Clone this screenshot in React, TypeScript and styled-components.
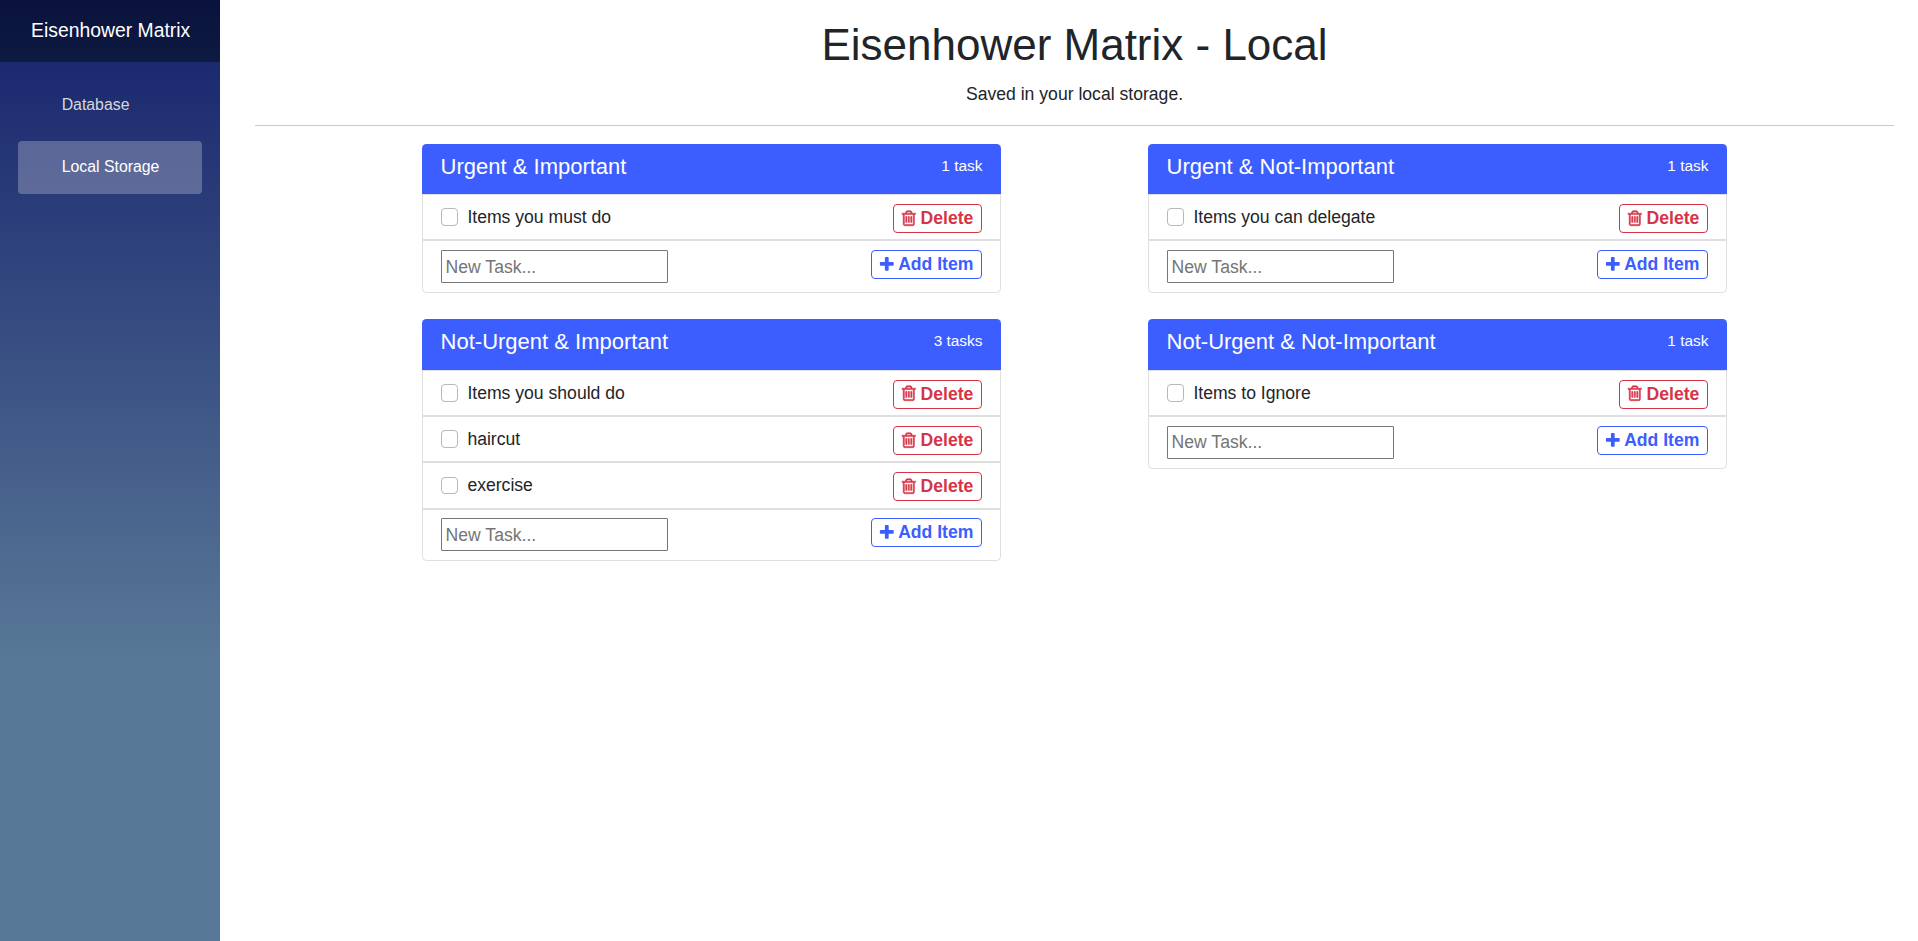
import React, { useState } from "react";
import styled, { createGlobalStyle, css } from "styled-components";

const GlobalStyle = createGlobalStyle`
  *, *::before, *::after { box-sizing: border-box; }
  html { font-size: 17.6px; }
  body {
    margin: 0;
    background: #fff;
    color: #212529;
    font-family: "Liberation Sans", Arial, sans-serif;
    font-size: 1rem;
    line-height: 1.5;
  }
`;

const Page = styled.div`
  display: flex;
  min-height: 100vh;
`;

const Sidebar = styled.aside`
  flex: none;
  width: 220px;
  background: linear-gradient(180deg, #15216b 0%, #587897 70%);
`;

const Brand = styled.div`
  display: flex;
  align-items: center;
  height: 62px;
  padding-left: 31px;
  background: linear-gradient(180deg, #09123c, #0e1a42);
  color: #fff;
  font-size: 19.36px;
`;

const Nav = styled.nav`
  display: flex;
  flex-direction: column;
  gap: 9px;
  padding: 17px 18px 0;
`;

const NavLink = styled.a<{ $active?: boolean }>`
  display: flex;
  align-items: center;
  height: 53px;
  padding: 0 0 2px 43.7px;
  border-radius: 4px;
  font-size: 15.84px;
  color: #d7d7d7;
  text-decoration: none;
  ${(p) =>
    p.$active &&
    css`
      background: rgba(255, 255, 255, 0.25);
      color: #fff;
    `}
`;

const Main = styled.main`
  flex: 1;
  padding: 19.4px 24px 0 35px;
`;

const Heading = styled.h1`
  margin: 0 0 8.8px;
  font-size: 2.5rem;
  font-weight: 400;
  line-height: 1.2;
  text-align: center;
`;

const Lead = styled.p`
  margin: 0;
  text-align: center;
`;

const Divider = styled.hr`
  height: 1px;
  margin: 17.6px 0;
  border: 0;
  background: #c8c9ca;
`;

const Board = styled.div`
  display: grid;
  grid-template-columns: 579px 579px;
  column-gap: 147px;
  row-gap: 26.3px;
  justify-content: center;
  align-items: start;
`;

const Card = styled.section`
  display: flex;
  flex-direction: column;
`;

const CardHeader = styled.header`
  display: flex;
  justify-content: space-between;
  height: 50.6px;
  padding: 10.2px 18.6px 0;
  border-radius: 4.4px 4.4px 0 0;
  background: #3d5efe;
  color: #fff;
`;

const CardTitle = styled.h2`
  margin: 0;
  font-size: 1.25rem;
  font-weight: 400;
  line-height: 1.2;
`;

const TaskCount = styled.small`
  font-size: 15.4px;
  line-height: 23.1px;
`;

const Row = styled.div<{ $last?: boolean }>`
  display: flex;
  align-items: flex-start;
  justify-content: space-between;
  height: ${(p) => (p.$last ? "52.6px" : "46.26px")};
  padding: 8.8px 17.6px 0;
  border: 1px solid #dfdfdf;
  ${(p) => p.$last && "border-radius: 0 0 4.4px 4.4px;"}
`;

const TaskLabel = styled.label`
  display: flex;
  gap: 9.2px;
`;

const Checkbox = styled.input`
  appearance: none;
  flex: none;
  width: 1em;
  height: 1em;
  margin: 4.4px 0 0;
  border: 1px solid rgba(0, 0, 0, 0.28);
  border-radius: 0.25em;
  background: #fff;
  font-size: 1rem;
  &:checked { background: #3d5efe; }
`;

const TaskInput = styled.input`
  width: 227px;
  height: 32.6px;
  padding: 2px 2px 1px 4px;
  border: 1px solid #767676;
  border-radius: 1px;
  font: inherit;
  &::placeholder { color: #757575; }
`;

const Button = styled.button<{ $tone: "danger" | "primary" }>`
  display: flex;
  align-items: center;
  height: 29px;
  padding: 0 8px;
  border: 1px solid currentColor;
  border-radius: 4px;
  background: #fff;
  color: ${(p) => (p.$tone === "danger" ? "#d63447" : "#3d5efe")};
  font-family: inherit;
  font-size: 1rem;
  font-weight: 700;
  line-height: 27px;
`;

const Icon = styled.svg<{ $gap: number }>`
  flex: none;
  width: 17.6px;
  height: 17.6px;
  margin-left: -2.2px;
  margin-right: ${(p) => p.$gap}px;
  fill: currentColor;
`;

const TrashIcon = () => (
  <Icon viewBox="0 60 1792 1792" $gap={3.3} stroke="currentColor" strokeWidth={50} aria-hidden="true">
    <path d="M704 736v576q0 14-9 23t-23 9h-64q-14 0-23-9t-9-23v-576q0-14 9-23t23-9h64q14 0 23 9t9 23zm256 0v576q0 14-9 23t-23 9h-64q-14 0-23-9t-9-23v-576q0-14 9-23t23-9h64q14 0 23 9t9 23zm256 0v576q0 14-9 23t-23 9h-64q-14 0-23-9t-9-23v-576q0-14 9-23t23-9h64q14 0 23 9t9 23zm128 724v-948h-896v948q0 22 7 40.5t14.5 27 10.5 8.5h832q3 0 10.5-8.5t14.5-27 7-40.5zm-672-1076h448l-48-117q-7-9-17-11h-317q-10 2-17 11zm928 32v64q0 14-9 23t-23 9h-96v948q0 83-47 143.5t-113 60.5h-832q-66 0-113-58.5t-47-141.5v-952h-96q-14 0-23-9t-9-23v-64q0-14 9-23t23-9h309l70-167q15-37 54-63t79-26h320q40 0 79 26t54 63l70 167h309q14 0 23 9t9 23z" />
  </Icon>
);

const PlusIcon = () => (
  <Icon viewBox="0 30 1792 1792" $gap={2.3} aria-hidden="true">
    <path d="M1600 736v192q0 40-28 68t-68 28h-416v416q0 40-28 68t-68 28h-192q-40 0-68-28t-28-68v-416h-416q-40 0-68-28t-28-68v-192q0-40 28-68t68-28h416v-416q0-40 28-68t68-28h192q40 0 68 28t28 68v416h416q40 0 68 28t28 68z" />
  </Icon>
);

interface Quadrant {
  title: string;
  tasks: string[];
}

const initialQuadrants: Quadrant[] = [
  { title: "Urgent & Important", tasks: ["Items you must do"] },
  { title: "Urgent & Not-Important", tasks: ["Items you can delegate"] },
  { title: "Not-Urgent & Important", tasks: ["Items you should do", "haircut", "exercise"] },
  { title: "Not-Urgent & Not-Important", tasks: ["Items to Ignore"] },
];

function QuadrantCard({ quadrant }: { quadrant: Quadrant }) {
  const [tasks, setTasks] = useState(quadrant.tasks);
  const [draft, setDraft] = useState("");

  const addTask = () => {
    if (!draft.trim()) return;
    setTasks([...tasks, draft.trim()]);
    setDraft("");
  };

  return (
    <Card>
      <CardHeader>
        <CardTitle>{quadrant.title}</CardTitle>
        <TaskCount>{`${tasks.length} ${tasks.length === 1 ? "task" : "tasks"}`}</TaskCount>
      </CardHeader>
      {tasks.map((task, index) => (
        <Row key={`${task}-${index}`}>
          <TaskLabel>
            <Checkbox type="checkbox" />
            {task}
          </TaskLabel>
          <Button $tone="danger" onClick={() => setTasks(tasks.filter((_, i) => i !== index))}>
            <TrashIcon />
            Delete
          </Button>
        </Row>
      ))}
      <Row $last>
        <TaskInput placeholder="New Task..." value={draft} onChange={(e) => setDraft(e.target.value)} />
        <Button $tone="primary" onClick={addTask}>
          <PlusIcon />
          Add Item
        </Button>
      </Row>
    </Card>
  );
}

export default function App() {
  return (
    <>
      <GlobalStyle />
      <Page>
        <Sidebar>
          <Brand>Eisenhower Matrix</Brand>
          <Nav>
            <NavLink href="#database">Database</NavLink>
            <NavLink href="#local" $active>
              Local Storage
            </NavLink>
          </Nav>
        </Sidebar>
        <Main>
          <Heading>Eisenhower Matrix - Local</Heading>
          <Lead>Saved in your local storage.</Lead>
          <Divider />
          <Board>
            {initialQuadrants.map((quadrant) => (
              <QuadrantCard key={quadrant.title} quadrant={quadrant} />
            ))}
          </Board>
        </Main>
      </Page>
    </>
  );
}
